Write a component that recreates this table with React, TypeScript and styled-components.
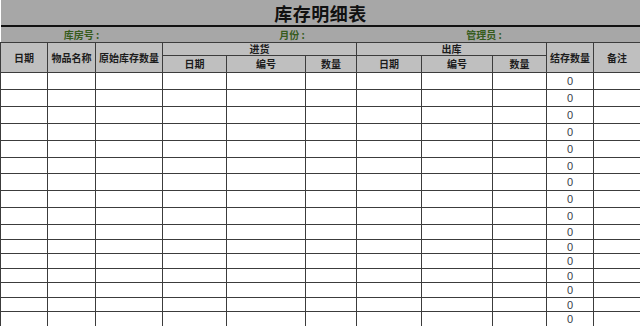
import React from "react";
import styled, { createGlobalStyle } from "styled-components";

const GlobalStyle = createGlobalStyle`
  html, body {
    margin: 0;
    padding: 0;
    background: #ffffff;
  }
  body {
    font-family: "Noto Sans CJK SC", "Liberation Sans", sans-serif;
    overflow: hidden;
  }
`;

const BAND = "#a7a7a7";
const HEAD = "#bfbfbf";
const LINE = "#3c3c3c";

const colWidths = [47, 48, 67, 64, 79, 51, 65, 71, 54, 47, 47];

// first nine rows are taller, the rest are tighter
const rowHeights = [17, 17, 17, 17, 17, 16, 17, 17, 17, 15, 14, 15, 14, 15, 14, 15];

const Sheet = styled.table`
  width: 640px;
  table-layout: fixed;
  border-collapse: collapse;
  border-spacing: 0;
  font-family: "Noto Sans CJK SC", "Liberation Sans", sans-serif;
`;

const TitleCell = styled.td`
  height: 25px;
  padding: 0;
  background: ${BAND};
  border-bottom: 2px solid #111111;
  text-align: center;
  font-size: 18px;
  font-weight: 700;
  line-height: 22px;
  color: #111111;
  letter-spacing: 0.5px;
`;

const InfoCell = styled.td`
  height: 15px;
  padding: 0;
  background: ${BAND};
  border-bottom: 1px solid ${LINE};
  text-align: center;
  font-size: 10px;
  font-weight: 700;
  line-height: 12px;
  color: #365c1d;
  white-space: pre;
`;

const HeadCell = styled.th<{ $h?: number }>`
  height: ${(p) => p.$h ?? 12}px;
  padding: 0;
  background: ${HEAD};
  border: 1px solid ${LINE};
  text-align: center;
  vertical-align: middle;
  font-size: 10px;
  font-weight: 700;
  line-height: 12px;
  color: #1c1c1c;
  white-space: nowrap;
  overflow: hidden;
`;

const Cell = styled.td<{ $h: number }>`
  height: ${(p) => p.$h - 1}px;
  padding: 0;
  background: #ffffff;
  border: 1px solid ${LINE};
  text-align: center;
  vertical-align: middle;
  font-family: "Liberation Sans", "Noto Sans CJK SC", sans-serif;
  font-size: 11px;
  line-height: 10px;
  color: #363c48;
`;

const inGoods = ["日期", "编号", "数量"];

export default function App() {
  return (
    <>
      <GlobalStyle />
      <Sheet>
        <colgroup>
          {colWidths.map((w, i) => (
            <col key={i} style={{ width: w }} />
          ))}
        </colgroup>
        <tbody>
          <tr>
            <TitleCell colSpan={11}>库存明细表</TitleCell>
          </tr>
          <tr>
            <InfoCell colSpan={3}>库房号 :</InfoCell>
            <InfoCell colSpan={4}>月份 :</InfoCell>
            <InfoCell colSpan={2}>管理员 :</InfoCell>
            <InfoCell colSpan={2} />
          </tr>
          <tr>
            <HeadCell rowSpan={2}>日期</HeadCell>
            <HeadCell rowSpan={2}>物品名称</HeadCell>
            <HeadCell rowSpan={2}>原始库存数量</HeadCell>
            <HeadCell colSpan={3}>进货</HeadCell>
            <HeadCell colSpan={3}>出库</HeadCell>
            <HeadCell rowSpan={2}>结存数量</HeadCell>
            <HeadCell rowSpan={2}>备注</HeadCell>
          </tr>
          <tr>
            {[...inGoods, ...inGoods].map((t, i) => (
              <HeadCell key={i} $h={16}>
                {t}
              </HeadCell>
            ))}
          </tr>
          {rowHeights.map((h, r) => (
            <tr key={r}>
              {colWidths.map((_, c) => (
                <Cell key={c} $h={h}>
                  {c === 9 ? "0" : ""}
                </Cell>
              ))}
            </tr>
          ))}
        </tbody>
      </Sheet>
    </>
  );
}
